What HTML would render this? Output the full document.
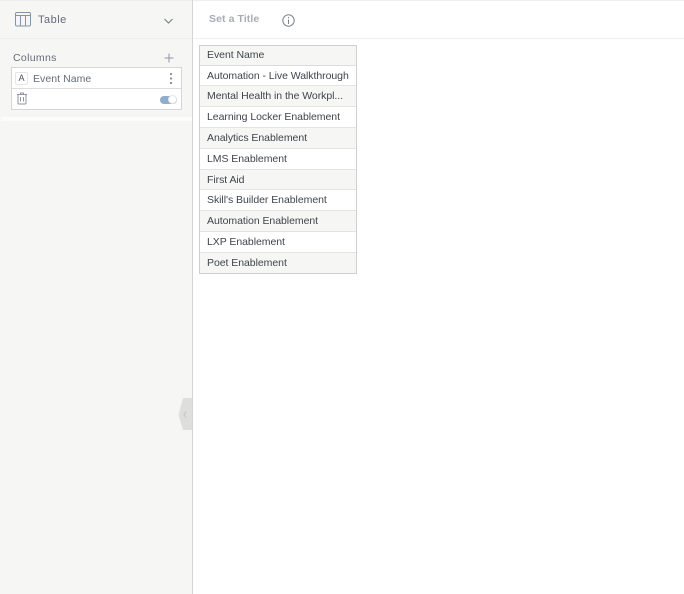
<!DOCTYPE html>
<html>
<head>
<meta charset="utf-8">
<style>
html,body{margin:0;padding:0;background:#fff;}
body{width:684px;height:594px;position:relative;overflow:hidden;font-family:"Liberation Sans",sans-serif;}
.a{position:absolute;}
.t{position:absolute;white-space:nowrap;}
.row{position:absolute;left:0;width:156px;box-sizing:border-box;border-bottom:1px solid #e3e3e1;font-size:10.5px;color:#3f444c;padding-left:7px;letter-spacing:-.05px;}
.alt{background:#f6f6f4;}
</style>
</head>
<body>
<!-- top line -->
<div class="a" style="left:0;top:0;width:684px;height:1px;background:#eeeef0;"></div>
<!-- sidebar -->
<div class="a" style="left:0;top:1px;width:192px;height:593px;background:#f6f6f4;"></div>
<div class="a" style="left:192px;top:0;width:1px;height:594px;background:#d4d4d4;"></div>
<div class="a" style="left:0;top:38px;width:192px;height:1px;background:#eeeeee;"></div>
<div class="a" style="left:193px;top:38px;width:491px;height:1px;background:#eef0ef;"></div>
<div class="a" style="left:1px;top:117px;width:191px;height:4px;background:#fcfcfb;"></div>

<!-- table icon -->
<svg class="a" style="left:15px;top:12px;" width="16" height="15" viewBox="0 0 16 15" fill="none" stroke="#8494a6" stroke-width="1">
<rect x=".5" y=".5" width="15" height="13.5" rx="1.5"/>
<path d="M.5 3.5H15.5M5.5 3.5V14M10.5 3.5V14"/>
</svg>
<div class="t" style="left:38px;top:13px;font-size:11px;color:#636d7a;letter-spacing:.5px;line-height:14px;">Table</div>
<svg class="a" style="left:164px;top:18px;" width="9" height="6" viewBox="0 0 9 6" fill="none" stroke="#6f7a86" stroke-width="1">
<path d="M.5 1L4.5 5L8.5 1"/>
</svg>

<div class="t" style="left:13px;top:51px;font-size:10.5px;color:#636d7a;letter-spacing:.33px;line-height:14px;">Columns</div>
<svg class="a" style="left:164px;top:53px;" width="10" height="10" viewBox="0 0 10 10" stroke="#8d98a3" stroke-width="1">
<path d="M5 .5V9.5M.5 5H9.5"/>
</svg>

<!-- column box -->
<div class="a" style="left:11px;top:67px;width:171px;height:43px;box-sizing:border-box;border:1px solid #d6d6d6;background:#fff;"></div>
<div class="a" style="left:12px;top:88px;width:169px;height:1px;background:#dcdcdc;"></div>
<div class="a" style="left:15px;top:72px;width:13px;height:13px;box-sizing:border-box;border:1px solid #e6e6e6;border-radius:2px;font-size:9px;color:#4c5560;text-align:center;line-height:11px;">A</div>
<div class="t" style="left:33px;top:72px;font-size:10.5px;color:#636d7a;letter-spacing:.05px;line-height:14px;">Event Name</div>
<svg class="a" style="left:169px;top:72px;" width="4" height="13" viewBox="0 0 4 13" fill="#828d98">
<circle cx="2" cy="2" r="1.1"/><circle cx="2" cy="6.5" r="1.1"/><circle cx="2" cy="11" r="1.1"/>
</svg>
<!-- trash -->
<svg class="a" style="left:16px;top:92px;" width="12" height="13" viewBox="0 0 12 13" fill="none" stroke="#8e97a0" stroke-width="1">
<path d="M1 2.5H11M4.5 2.5V1H7.5V2.5M2 2.5V11Q2 12 3 12H9Q10 12 10 11V2.5M4.5 5V9.5M7.5 5V9.5"/>
</svg>
<!-- toggle -->
<div class="a" style="left:160px;top:96px;width:17px;height:8px;border-radius:4px;background:#8fadcc;"></div>
<div class="a" style="left:168px;top:95px;width:9px;height:9px;box-sizing:border-box;border-radius:50%;background:#fff;border:1px solid #e2e6ea;"></div>

<!-- collapse handle -->
<svg class="a" style="left:178px;top:398px;" width="14" height="32" viewBox="0 0 14 32">
<path d="M5 0H14V32H5L0.5 17Z" fill="#dededc"/>
<path d="M8 13.5L6 16.5L8 19.5" fill="none" stroke="#c4c4c4" stroke-width="1"/>
</svg>

<!-- title -->
<div class="t" style="left:209px;top:12px;font-size:10.5px;font-weight:bold;color:#a6adb5;letter-spacing:.08px;line-height:14px;">Set a Title</div>
<svg class="a" style="left:282px;top:14px;" width="13" height="13" viewBox="0 0 13 13" fill="none" stroke="#7a838e" stroke-width="1">
<circle cx="6.5" cy="6.5" r="5.7"/>
<path d="M6.5 5.5V10"/>
<path d="M6.5 3V4.2"/>
</svg>

<!-- table -->
<div class="a" style="left:199px;top:45px;width:158px;height:229px;box-sizing:border-box;border:1px solid #cfcfcf;background:#fff;">
<div class="row alt" style="top:0;height:20px;line-height:18px;border-bottom-color:#dcdcdc;">Event Name</div>
<div class="row" style="top:20px;height:20px;line-height:20px;">Automation - Live Walkthrough</div>
<div class="row alt" style="top:40px;height:21px;line-height:20px;">Mental Health in the Workpl...</div>
<div class="row" style="top:61px;height:21px;line-height:20px;">Learning Locker Enablement</div>
<div class="row alt" style="top:82px;height:21px;line-height:20px;">Analytics Enablement</div>
<div class="row" style="top:103px;height:21px;line-height:20px;">LMS Enablement</div>
<div class="row alt" style="top:124px;height:20px;line-height:20px;">First Aid</div>
<div class="row" style="top:144px;height:21px;line-height:20px;">Skill's Builder Enablement</div>
<div class="row alt" style="top:165px;height:21px;line-height:20px;">Automation Enablement</div>
<div class="row" style="top:186px;height:21px;line-height:20px;">LXP Enablement</div>
<div class="row alt" style="top:207px;height:20px;line-height:20px;border-bottom:0;">Poet Enablement</div>
</div>
</body>
</html>
